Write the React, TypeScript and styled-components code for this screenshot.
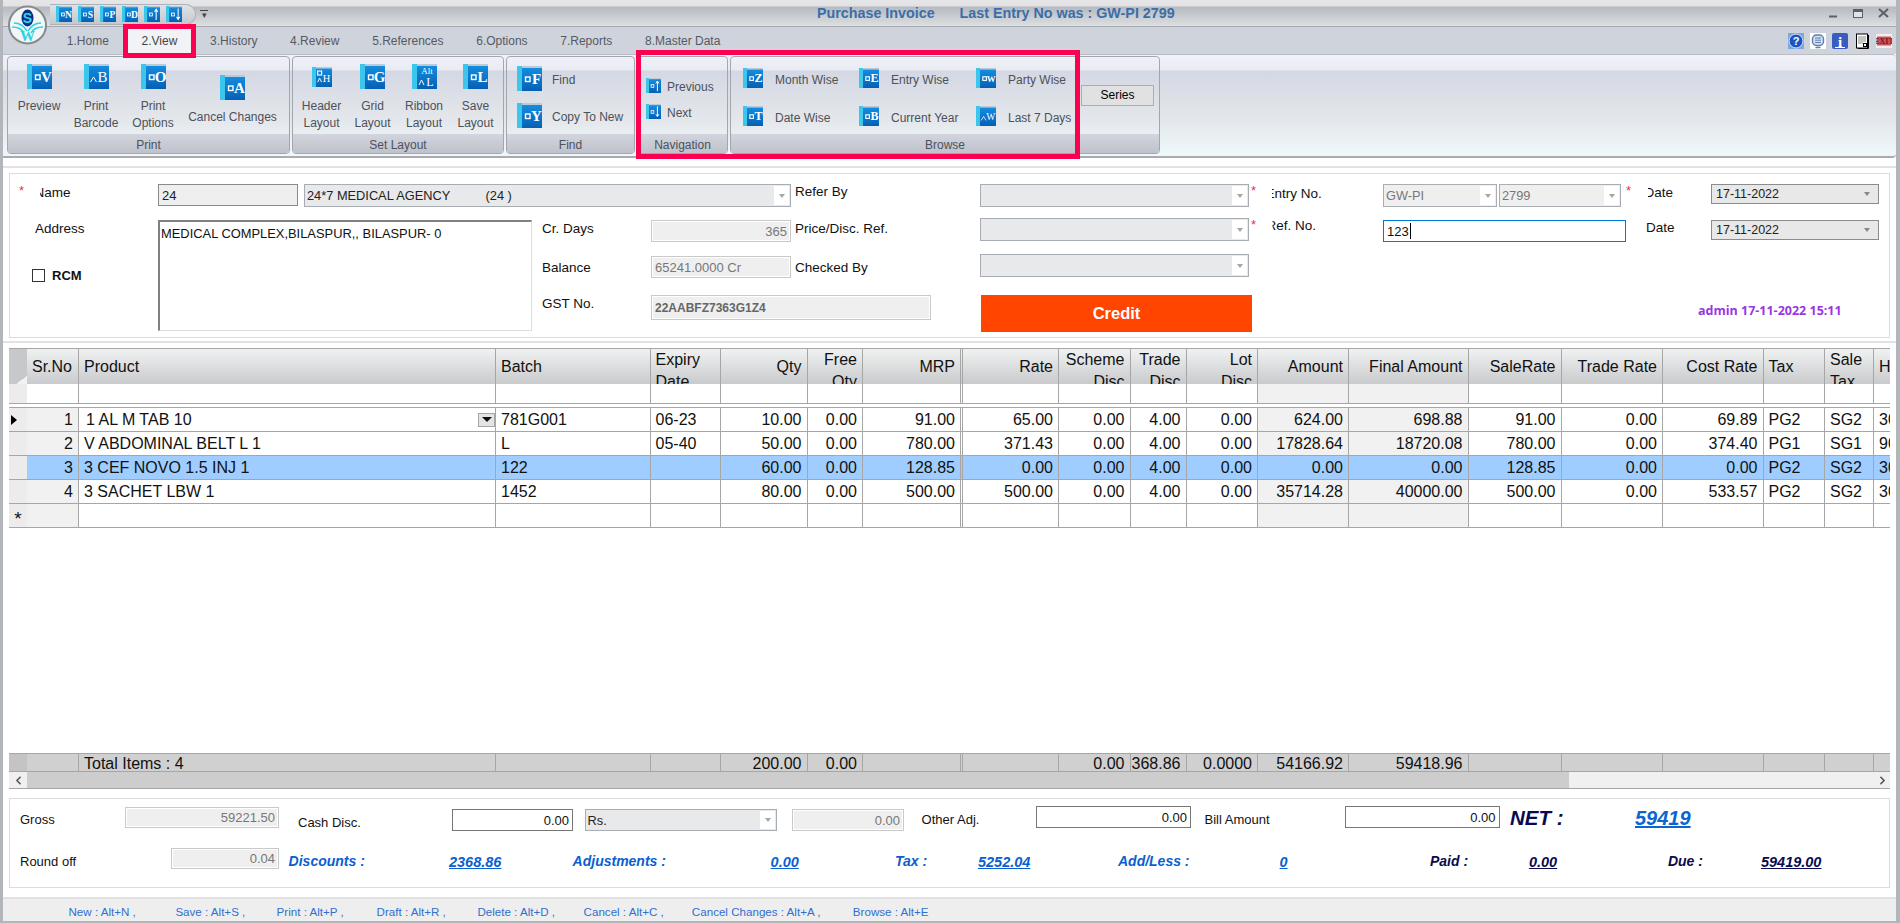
import React from "react";
import styled, { createGlobalStyle, css } from "styled-components";
import { ChevronLeft, ChevronRight } from "lucide-react";

const GlobalStyle = createGlobalStyle`
  html, body {
    margin: 0;
    padding: 0;
    overflow: hidden;
    background: #fff;
    font-family: "Liberation Sans", Arial, sans-serif;
  }
  * {
    box-sizing: border-box;
  }
`;

const Win = styled.div`
  position: relative;
  width: 1900px;
  height: 923px;
  display: flex;
  flex-direction: column;
  background: #fff;
  border-left: 3px solid #b2b5b9;
  border-right: 4px solid #b2b5b9;
  border-bottom: 2px solid #b2b5b9;
  overflow: hidden;
`;

/* ---------- title bar ---------- */

const TitleBar = styled.div`
  height: 27px;
  flex: none;
  display: flex;
  align-items: center;
  background: linear-gradient(#e6e6e8 0, #e2e2e5 6px, #b6bbc1 7px, #c6c9ce 15px, #dfe1e3 27px);
  border-bottom: 1px solid #a6aab0;
`;

const LogoSpot = styled.div`
  position: absolute;
  left: 5px;
  top: 5px;
  width: 39px;
  height: 40px;
  z-index: 3;
`;

const QuickBar = styled.div`
  margin-left: 47px;
  margin-top: 2px;
  width: 146px;
  height: 21px;
  display: flex;
  align-items: center;
  gap: 6px;
  padding-left: 6px;
  border: 1px solid #aeb2b8;
  border-left: none;
  border-radius: 0 10px 10px 0;
  background: linear-gradient(#e0e2e5, #c4c8cd);
`;

const QuickMore = styled.div`
  width: 8px;
  margin-left: 4px;
  margin-top: 2px;
  color: #444;
  font-size: 9px;
  line-height: 8px;
  text-align: center;
  border-top: 1px solid #444;
`;

const Title = styled.div`
  margin-left: 609px;
  display: flex;
  gap: 25px;
  color: #3a6ea8;
  font-size: 14.3px;
  font-weight: bold;
  white-space: nowrap;
`;

const WinControls = styled.div`
  margin-left: auto;
  display: flex;
  align-items: center;
  gap: 9px;
  padding-right: 5px;
`;

const WinBtn = styled.div`
  width: 16px;
  height: 14px;
  display: flex;
  align-items: center;
  justify-content: center;
`;

const TabStrip = styled.div`
  height: 27px;
  flex: none;
  display: flex;
  align-items: center;
  padding-left: 47.5px;
  background: #cfd3dc;
`;

const Tab = styled.div<{ $active?: boolean }>`
  position: relative;
  height: 100%;
  display: flex;
  align-items: center;
  padding: 0 16.35px;
  font-size: 12px;
  color: #555a63;
  white-space: nowrap;
  ${(p) =>
    p.$active &&
    css`
      background: #f2f3f6;
      color: #444;
      &::after {
        content: "";
        position: absolute;
        left: -2px;
        right: -2px;
        top: -3px;
        bottom: -4px;
        border: 5px solid #fb0050;
        z-index: 2;
      }
    `}
`;

const HelpIcons = styled.div`
  margin-left: auto;
  display: flex;
  align-items: center;
  gap: 6px;
  padding-right: 4px;
`;

/* ---------- ribbon ---------- */

const Ribbon = styled.div`
  position: relative;
  height: 104px;
  flex: none;
  display: flex;
  gap: 2px;
  padding: 1px 0 0 4px;
  border-bottom: 2px solid #a9abae;
  border-top: 1px solid #b9bcc2;
  border-radius: 0 4px 4px 0;
  background: linear-gradient(#f1f2f8 0, #e9ebf3 15px, #d4d8e4 16px, #e2e5e9 60px, #eef8fa 100px);
`;

const Group = styled.div<{ $w: number }>`
  width: ${(p) => p.$w}px;
  height: 98px;
  flex: none;
  display: flex;
  flex-direction: column;
  border: 1px solid #a2a6ad;
  border-radius: 4px;
  overflow: hidden;
`;

const GroupBody = styled.div`
  flex: 1;
  display: flex;
  min-height: 0;
`;

const GroupCaption = styled.div`
  height: 19px;
  flex: none;
  padding-top: 3px;
  font-size: 12px;
  line-height: 16px;
  text-align: center;
  color: #4c515a;
  background: linear-gradient(#d2d5de, #bfc2cb);
`;

const LargeRow = styled.div`
  display: flex;
  padding-left: 3px;
`;

const LargeBtn = styled.div<{ $w: number; $top?: number }>`
  width: ${(p) => p.$w}px;
  display: flex;
  flex-direction: column;
  align-items: center;
  padding-top: ${(p) => p.$top ?? 7}px;
  gap: 9px;
  font-size: 12px;
  line-height: 17px;
  text-align: center;
  color: #4c515a;
  white-space: pre-line;
`;

const IconSlot = styled.div`
  height: 25px;
  display: flex;
  align-items: center;
`;

const SmallList = styled.div<{ $gap: number; $left: number; $top: number }>`
  display: flex;
  flex-direction: column;
  gap: ${(p) => p.$gap}px;
  padding: ${(p) => p.$top}px 0 0 ${(p) => p.$left}px;
`;

const SmallBtn = styled.div<{ $gap: number }>`
  display: flex;
  align-items: center;
  gap: ${(p) => p.$gap}px;
  font-size: 12px;
  color: #4c515a;
  white-space: nowrap;
`;

const BtnText = styled.span`
  padding-top: 3px;
`;

const BrowseGrid = styled.div`
  display: grid;
  grid-template-columns: 116px 117px 105px;
  grid-auto-rows: 20px;
  row-gap: 18px;
  padding: 11px 0 0 12px;
`;

const SeriesBtn = styled.div`
  align-self: center;
  width: 73px;
  height: 21px;
  font-size: 12px;
  line-height: 19px;
  text-align: center;
  color: #000;
  background: #e1e1e1;
  border: 1px solid #adadad;
`;

const Annotation = styled.div`
  position: absolute;
  left: 632.5px;
  top: -5px;
  width: 444.5px;
  height: 109px;
  border: 5px solid #fb0050;
  z-index: 2;
`;

/* ---------- form ---------- */

const Rule = styled.div<{ $top: number }>`
  flex: none;
  height: 2px;
  margin-top: ${(p) => p.$top}px;
  background: #e2e2e2;
`;

const Panel = styled.div`
  flex: none;
  margin: 5px 6px 0;
  height: 165px;
  padding-top: 10px;
  border: 1px solid #dcdcdc;
`;

const FormGrid = styled.div`
  display: grid;
  grid-template-columns: 148px 140px 6px 228px 119px 140px 189px 269px 134px 114px 2px 122px 90px 168px;
  grid-template-rows: 34px 36px 41px 37px;
`;

const placed = css<{ $at: string; $top?: number; $w?: number; $h?: number }>`
  grid-area: ${(p) => p.$at};
  margin-top: ${(p) => p.$top ?? 0}px;
  ${(p) => p.$w !== undefined && `width: ${p.$w}px; justify-self: start;`}
  ${(p) => p.$h !== undefined && `height: ${p.$h}px; align-self: start;`}
`;

const Label = styled.div<{ $at: string; $top?: number; $pad?: number; $clip?: number }>`
  ${placed}
  padding-left: ${(p) => p.$pad ?? 0}px;
  font-size: 13.5px;
  line-height: 16px;
  height: 16px;
  color: #111;
  white-space: nowrap;
  ${(p) => p.$clip !== undefined && `clip-path: inset(0 0 0 ${p.$clip}px);`}
`;

const Star = styled.div<{ $at: string; $top?: number; $pad: number }>`
  ${placed}
  padding-left: ${(p) => p.$pad}px;
  font-size: 13px;
  line-height: 13px;
  height: 13px;
  color: #f0304a;
`;

const fieldBase = css`
  display: flex;
  align-items: center;
  padding: 0 3px;
  font-size: 13px;
  white-space: nowrap;
  overflow: hidden;
`;

const ReadOnlyBox = styled.div<{ $at?: string; $top?: number; $w?: number; $h?: number; $right?: boolean; $dark?: boolean }>`
  ${(p) => p.$at && placed}
  ${fieldBase}
  height: ${(p) => p.$h ?? 22}px;
  justify-content: ${(p) => (p.$right ? "flex-end" : "flex-start")};
  background: #efefef;
  color: ${(p) => (p.$dark ? "#222" : "#777")};
  border: 1px solid ${(p) => (p.$dark ? "#8a8a8a" : "#c9c9c9")};
  box-shadow: ${(p) => (p.$dark ? "none" : "inset 0 0 0 1px #fff")};
  ${(p) => p.$w !== undefined && `width: ${p.$w}px;`}
  flex-shrink: 0;
`;

const GstBox = styled(ReadOnlyBox)`
  font-size: 12px;
  font-weight: bold;
  color: #666;
`;

const Combo = styled.div<{ $at?: string; $top?: number; $w?: number; $h?: number; $soft?: boolean }>`
  ${(p) => p.$at && placed}
  ${fieldBase}
  height: ${(p) => p.$h ?? 23}px;
  padding: 0 1px 0 2px;
  font-size: 12.8px;
  background: ${(p) => (p.$soft ? "#efefef" : "#e8e9eb")};
  color: ${(p) => (p.$soft ? "#777" : "#222")};
  border: 1px solid #a8adb3;
  ${(p) => p.$w !== undefined && `width: ${p.$w}px;`}
  flex-shrink: 0;
`;

const ComboText = styled.span`
  flex: 1;
  white-space: pre;
`;

const ComboArrow = styled.span`
  width: 15px;
  height: calc(100% - 2px);
  flex: none;
  display: flex;
  align-items: center;
  justify-content: center;
  background: #fff;
  &::after {
    content: "";
    border-left: 3px solid transparent;
    border-right: 3px solid transparent;
    border-top: 4px solid #a5a5a5;
  }
`;

const DateBox = styled.div<{ $at: string; $top?: number }>`
  ${placed}
  ${fieldBase}
  height: 20px;
  align-self: start;
  padding: 0 8px 0 4px;
  justify-content: space-between;
  font-size: 12.5px;
  color: #222;
  background: #e8e8e8;
  border: 1px solid #8c8c8c;
  &::after {
    content: "";
    border-left: 3px solid transparent;
    border-right: 3px solid transparent;
    border-top: 4px solid #888;
  }
`;

const FocusInput = styled.div<{ $at: string; $top?: number; $w?: number; $h?: number }>`
  ${placed}
  ${fieldBase}
  border: 1px solid #0078d7;
  color: #111;
`;

const Caret = styled.span`
  width: 1px;
  height: 16px;
  margin-left: 1px;
  background: #000;
`;

const AddressBox = styled.div<{ $at: string; $top?: number; $h?: number }>`
  ${placed}
  padding: 4px 1px;
  font-size: 12.9px;
  line-height: 15px;
  color: #111;
  white-space: nowrap;
  border: 1px solid #dedede;
  border-top: 2px solid #808080;
  border-left: 2px solid #808080;
`;

const RcmCell = styled.label<{ $at: string; $top?: number }>`
  ${placed}
  padding-left: 22px;
  display: flex;
  align-items: center;
  gap: 7px;
  height: 14px;
  font-size: 13px;
  font-weight: bold;
  color: #111;
`;

const RcmBox = styled.span`
  width: 13px;
  height: 13px;
  border: 1px solid #333;
`;

const CreditBtn = styled.div<{ $at: string; $top?: number; $w?: number; $h?: number }>`
  ${placed}
  margin-left: 1px;
  display: flex;
  align-items: center;
  justify-content: center;
  font-size: 16.5px;
  font-weight: bold;
  color: #fff;
  background: #ff4500;
`;

const AuditText = styled.div<{ $at: string; $top?: number }>`
  ${placed}
  padding-left: 77px;
  font-family: "Open Sans", sans-serif;
  font-size: 12.5px;
  font-weight: bold;
  line-height: 16px;
  color: #9a35e6;
  white-space: nowrap;
`;

/* ---------- grid ---------- */

const GridFrame = styled.div`
  flex: none;
  margin: 3px 0 0;
  padding: 5px 6px 0;
  border-top: 2px solid #e2e2e2;
`;

const DataGrid = styled.div`
  height: 441px;
  display: flex;
  flex-direction: column;
  border-top: 1px solid #a6a6a6;
  border-bottom: 1px solid #a6a6a6;
  overflow: hidden;
`;

type Col = { w: number; right?: boolean; shade?: boolean; double?: boolean };

const columns: Col[] = [
  { w: 18, shade: true },
  { w: 52, right: true },
  { w: 417 },
  { w: 154.5 },
  { w: 70.5 },
  { w: 86.5, right: true },
  { w: 55.5, right: true },
  { w: 100, right: true, double: true },
  { w: 96, right: true },
  { w: 71.5, right: true },
  { w: 56, right: true },
  { w: 71.5, right: true },
  { w: 91, right: true, shade: true },
  { w: 119.5, right: true, shade: true },
  { w: 93, right: true },
  { w: 101.5, right: true },
  { w: 100.5, right: true },
  { w: 61.5 },
  { w: 49 },
  { w: 60 },
];

const trackList = columns.map((c) => `${c.w}px`).join(" ");

const Row = styled.div<{ $h: number }>`
  flex: none;
  height: ${(p) => p.$h}px;
  display: grid;
  grid-template-columns: ${trackList};
`;

const cellEdge = css<{ $double?: boolean }>`
  border-right: ${(p) => (p.$double ? "3px double #a6a6a6" : "1px solid #a6a6a6")};
`;

const HeadCell = styled.div<{ $right?: boolean; $double?: boolean; $two?: boolean }>`
  ${cellEdge}
  display: flex;
  align-items: ${(p) => (p.$two ? "flex-start" : "center")};
  justify-content: ${(p) => (p.$right ? "flex-end" : "flex-start")};
  padding: 0 5px;
  font-size: 16px;
  line-height: ${(p) => (p.$two ? "22px" : "18px")};
  color: #111;
  text-align: ${(p) => (p.$right ? "right" : "left")};
  white-space: pre;
  overflow: hidden;
  background: linear-gradient(#f0f2f2, #c8cacc);
`;

const CornerCell = styled(HeadCell)`
  background:
    linear-gradient(to bottom right, transparent 50%, #f2f2f2 50%) right bottom / 11px 8px no-repeat,
    #c6c8ca;
  border-right: none;
`;

const Cell = styled.div<{ $right?: boolean; $double?: boolean; $tone?: string }>`
  ${cellEdge}
  display: flex;
  align-items: center;
  justify-content: ${(p) => (p.$right ? "flex-end" : "flex-start")};
  padding: 0 5px;
  border-bottom: 1px solid #a6a6a6;
  background: ${(p) => p.$tone ?? "#fff"};
  font-size: 16px;
  color: #111;
  white-space: nowrap;
  overflow: hidden;
`;

const GutterCell = styled(Cell)`
  justify-content: center;
  padding: 0;
  border-right: none;
  background: #ececec;
`;

const TotalGutter = styled(GutterCell)`
  background: #c4c4c4;
  border-bottom: none;
`;

const TotalCell = styled(Cell)`
  padding-top: 3px;
  font-size: 16px;
  background: #d0d0d0;
  border-bottom: none;
`;

const RowPointer = styled.span`
  border-top: 5px solid transparent;
  border-bottom: 5px solid transparent;
  border-left: 6px solid #000;
  margin-right: 9px;
`;

const RowStar = styled.span`
  font-size: 19px;
  line-height: 10px;
  padding-top: 6px;
`;

const ProductEdit = styled.span`
  flex: 1;
  padding-left: 2px;
  padding-top: 1px;
`;

const CellDrop = styled.span`
  width: 17px;
  height: 14px;
  margin-right: -5px;
  display: flex;
  align-items: center;
  justify-content: center;
  background: #e4e4e4;
  border: 1px solid #a6a6a6;
  &::after {
    content: "";
    border-left: 5px solid transparent;
    border-right: 5px solid transparent;
    border-top: 5px solid #111;
  }
`;

const DoubleLine = styled.div`
  flex: none;
  height: 4px;
  border-bottom: 1px solid #a6a6a6;
`;

const GridGap = styled.div`
  flex: 1;
`;

const TotalsRow = styled(Row)`
  border-top: 1px solid #a6a6a6;
  border-bottom: 1px solid #a6a6a6;
  background: #d0d0d0;
`;

const ScrollBar = styled.div`
  flex: none;
  height: 16px;
  display: flex;
  background: #f0f0f0;
  color: #555;
`;

const ScrollEnd = styled.div<{ $w: number }>`
  width: ${(p) => p.$w}px;
  display: flex;
  align-items: center;
  justify-content: center;
`;

const ScrollThumb = styled.div`
  width: 1542px;
  background: #cdcdcd;
`;

const ScrollTrack = styled.div`
  flex: 1;
`;

/* ---------- summary footer ---------- */

const Summary = styled.div`
  flex: none;
  height: 90px;
  margin: 9px 6px 0;
  padding: 7px 0 0 10px;
  display: flex;
  flex-direction: column;
  border: 1px solid #dcdcdc;
`;

const SummaryRow = styled.div<{ $h: number }>`
  height: ${(p) => p.$h}px;
  display: flex;
  align-items: flex-start;
`;

const SumLabel = styled.div<{ $w: number; $ml?: number; $top: number }>`
  width: ${(p) => p.$w}px;
  margin-left: ${(p) => p.$ml ?? 0}px;
  margin-top: ${(p) => p.$top}px;
  flex: none;
  font-size: 13px;
  line-height: 16px;
  color: #111;
  white-space: nowrap;
`;

const AmountInput = styled.div<{ $w: number; $top: number }>`
  width: ${(p) => p.$w}px;
  height: 22px;
  margin-top: ${(p) => p.$top}px;
  flex: none;
  display: flex;
  align-items: center;
  justify-content: flex-end;
  padding: 0 3px;
  font-size: 13px;
  color: #111;
  background: #fff;
  border: 1px solid #777;
`;

const Spaced = styled.div<{ $ml: number; $top: number }>`
  margin-left: ${(p) => p.$ml}px;
  margin-top: ${(p) => p.$top}px;
  flex: none;
  display: flex;
`;

const NetLabel = styled.div`
  width: 125px;
  flex: none;
  margin-left: 10.4px;
  font-size: 20.5px;
  font-weight: bold;
  font-style: italic;
  line-height: 24px;
  color: #0a0a50;
`;

const NetValue = styled.a`
  font-size: 20px;
  font-weight: bold;
  font-style: italic;
  line-height: 24px;
  color: #0a66d0;
  text-decoration: underline;
`;

const SumText = styled.div<{ $w: number; $navy?: boolean; $ml?: number }>`
  width: ${(p) => p.$w}px;
  margin-left: ${(p) => p.$ml ?? 0}px;
  margin-top: 5px;
  flex: none;
  font-size: 14px;
  font-weight: bold;
  font-style: italic;
  line-height: 16px;
  color: ${(p) => (p.$navy ? "#0a0a50" : "#0a60d0")};
  white-space: nowrap;
`;

const SumValue = styled(SumText)`
  margin-top: 6px;
  font-size: 14.5px;
  text-decoration: underline;
`;

const StatusBar = styled.div`
  flex: 1;
  display: flex;
  align-items: center;
  padding: 3px 0 0 65.5px;
  font-size: 11.6px;
  color: #2f6fd0;
  background: #eee;
  white-space: nowrap;
`;

const Shortcut = styled.span<{ $w: number }>`
  width: ${(p) => p.$w}px;
  flex: none;
`;

/* ---------- drawings ---------- */

type Mark = "square" | "hat" | "header" | "alt" | "up" | "down";

const BookIcon = ({ size = 25, glyph = "", mark = "square" }: { size?: number; glyph?: string; mark?: Mark }) => (
  <svg width={size} height={size} viewBox="0 0 25 25" style={{ flex: "none", display: "block" }}>
    <defs>
      <linearGradient id="bookBlue" x1="0" y1="0" x2="0" y2="1">
        <stop offset="0" stopColor="#1590e4" />
        <stop offset="1" stopColor="#0560b4" />
      </linearGradient>
    </defs>
    <rect x="0" y="0" width="25" height="25" fill="url(#bookBlue)" />
    <rect x="5" y="0" width="20" height="2" fill="#bccad6" />
    <rect x="0" y="0" width="5" height="25" fill="#3dc6ec" />
    {(mark === "square" || mark === "up" || mark === "down") && (
      <rect x="8.5" y="11" width="4.5" height="4.5" fill="none" stroke="#fff" strokeWidth="1.4" />
    )}
    {mark === "square" && (
      <text
        x={glyph === "W" ? 19 : 19.5}
        y={glyph === "W" ? 17 : 18}
        textAnchor="middle"
        fontFamily="Liberation Serif"
        fontWeight="bold"
        fontSize={glyph === "W" ? 11 : 15}
        fill="#fff"
      >
        {glyph}
      </text>
    )}
    {mark === "hat" && (
      <>
        <path d="M6.5 18 L9.5 13 L12.5 18" fill="none" stroke="#fff" strokeWidth="1" />
        <text
          x="18.5"
          y="18"
          textAnchor="middle"
          fontFamily="Liberation Serif"
          fontSize={glyph === "W" ? 12 : 15}
          fill="#fff"
        >
          {glyph}
        </text>
      </>
    )}
    {mark === "header" && (
      <>
        <rect x="7" y="5" width="5" height="5" fill="none" stroke="#fff" strokeWidth="1.4" />
        <path d="M7 19 L9.5 14 L12 19" fill="none" stroke="#fff" strokeWidth="1.2" />
        <text x="18" y="19" textAnchor="middle" fontFamily="Liberation Serif" fontSize="13" fill="#fff">
          {glyph}
        </text>
      </>
    )}
    {mark === "alt" && (
      <>
        <text x="15" y="10" textAnchor="middle" fontFamily="Liberation Serif" fontSize="9" fill="#fff">
          Alt
        </text>
        <path d="M7 21 L9.5 16 L12 21" fill="none" stroke="#fff" strokeWidth="1" />
        <text x="18" y="22" textAnchor="middle" fontFamily="Liberation Serif" fontSize="12" fill="#fff">
          {glyph}
        </text>
      </>
    )}
    {mark === "up" && <path d="M19 22 V6 M16.5 9 L19 5 L21.5 9" fill="none" stroke="#fff" strokeWidth="1.6" />}
    {mark === "down" && <path d="M19 4 V20 M16.5 17 L19 21 L21.5 17" fill="none" stroke="#fff" strokeWidth="1.6" />}
  </svg>
);

const AppLogo = () => (
  <svg width="39" height="40" viewBox="0 0 39 40">
    <circle cx="19.5" cy="20" r="18.5" fill="#f4f6f6" stroke="#858a8e" strokeWidth="2" />
    <ellipse cx="19.5" cy="13" rx="6" ry="8.5" fill="#0d2d8a" />
    <text x="19.5" y="18" textAnchor="middle" fontFamily="Liberation Sans" fontWeight="bold" fontSize="14" fill="#35d6e8">
      S
    </text>
    <path d="M4 22 C10 22 14 24 16 28 M35 22 C29 22 25 24 23 28 M6 18 C12 18 16 21 19 26 M33 18 C27 18 23 21 20 26" fill="none" stroke="#27d5e4" strokeWidth="1.5" />
    <text x="19.5" y="36" textAnchor="middle" fontFamily="Liberation Serif" fontWeight="bold" fontSize="15" fill="#27d5e4">
      W
    </text>
  </svg>
);

const HelpIcon = () => (
  <svg width="16" height="16" viewBox="0 0 16 16" style={{ display: "block" }}>
    <rect width="16" height="16" fill="#7ea6dc" />
    <circle cx="8" cy="8" r="7" fill="#1d56c4" stroke="#d8e4f6" strokeWidth="1" />
    <text x="8" y="12" textAnchor="middle" fontFamily="Liberation Sans" fontWeight="bold" fontSize="11" fill="#fff">
      ?
    </text>
  </svg>
);

const ScreenIcon = () => (
  <svg width="16" height="16" viewBox="0 0 16 16" style={{ display: "block" }}>
    <rect width="16" height="16" fill="#fff" />
    <rect x="2.5" y="2" width="11" height="10.5" rx="4" fill="#d9e1ee" stroke="#5d7fb0" strokeWidth="1.4" />
    <path d="M5 5 H11 M5 7.2 H11 M5 9.5 H11" stroke="#5d7fb0" strokeWidth="1" />
    <path d="M5.5 14.5 H10.5" stroke="#5d7fb0" strokeWidth="1.4" />
  </svg>
);

const InfoIcon = () => (
  <svg width="16" height="16" viewBox="0 0 16 16" style={{ display: "block" }}>
    <rect width="16" height="16" rx="2" fill="#3a5cc0" />
    <text x="8" y="13.5" textAnchor="middle" fontFamily="Liberation Serif" fontWeight="bold" fontSize="15" fill="#fff">
      i
    </text>
    <path d="M3 14.5 H13" stroke="#fff" strokeWidth="1" />
  </svg>
);

const DocIcon = () => (
  <svg width="16" height="16" viewBox="0 0 16 16" style={{ display: "block" }}>
    <rect x="2.5" y="1" width="11" height="14" fill="#fff" stroke="#000" />
    <path d="M14.5 2 V15.5 H4" fill="none" stroke="#000" strokeWidth="1" />
    <path d="M4 4 H12 M4 6 H12 M4 8 H12 M4 10 H9" stroke="#888" strokeWidth="1" />
    <rect x="9.5" y="10.5" width="3" height="3" fill="none" stroke="#000" />
  </svg>
);

const ExitIcon = () => (
  <svg width="16" height="14" viewBox="0 0 16 14" style={{ display: "block" }}>
    <rect width="16" height="14" fill="#f4eeee" />
    <rect x="1" y="2.5" width="14" height="9" fill="#c7545c" />
    <text x="8" y="10" textAnchor="middle" fontFamily="Liberation Serif" fontWeight="bold" fontSize="8" fill="#7d1620">
      EXIT
    </text>
  </svg>
);

/* ---------- data ---------- */

const tabs = ["1.Home", "2.View", "3.History", "4.Review", "5.References", "6.Options", "7.Reports", "8.Master Data"];

const headers = [
  "",
  "Sr.No",
  "Product",
  "Batch",
  "Expiry\nDate",
  "Qty",
  "Free\nQty",
  "MRP",
  "Rate",
  "Scheme\nDisc",
  "Trade\nDisc",
  "Lot\nDisc",
  "Amount",
  "Final Amount",
  "SaleRate",
  "Trade Rate",
  "Cost Rate",
  "Tax",
  "Sale\nTax",
  "H",
];

const rows = [
  ["1", "1 AL M TAB 10", "781G001", "06-23", "10.00", "0.00", "91.00", "65.00", "0.00", "4.00", "0.00", "624.00", "698.88", "91.00", "0.00", "69.89", "PG2", "SG2", "30"],
  ["2", "V ABDOMINAL BELT L 1", "L", "05-40", "50.00", "0.00", "780.00", "371.43", "0.00", "4.00", "0.00", "17828.64", "18720.08", "780.00", "0.00", "374.40", "PG1", "SG1", "90"],
  ["3", "3 CEF NOVO 1.5 INJ 1", "122", "", "60.00", "0.00", "128.85", "0.00", "0.00", "4.00", "0.00", "0.00", "0.00", "128.85", "0.00", "0.00", "PG2", "SG2", "30"],
  ["4", "3 SACHET LBW 1", "1452", "", "80.00", "0.00", "500.00", "500.00", "0.00", "4.00", "0.00", "35714.28", "40000.00", "500.00", "0.00", "533.57", "PG2", "SG2", "30"],
  ["", "", "", "", "", "", "", "", "", "", "", "", "", "", "", "", "", "", ""],
];

const totals = ["", "Total Items : 4", "", "", "200.00", "0.00", "", "", "0.00", "368.86", "0.0000", "54166.92", "59418.96", "", "", "", "", "", ""];

const shortcuts: [string, number][] = [
  ["New : Alt+N ,", 106.9],
  ["Save : Alt+S ,", 101.2],
  ["Print : Alt+P ,", 100],
  ["Draft : Alt+R ,", 100.8],
  ["Delete : Alt+D ,", 106.2],
  ["Cancel : Alt+C ,", 108.3],
  ["Cancel Changes : Alt+A ,", 161],
  ["Browse : Alt+E", 100],
];

const browse: [string, string, Mark][] = [
  ["Z", "Month Wise", "square"],
  ["E", "Entry Wise", "square"],
  ["W", "Party Wise", "square"],
  ["T", "Date Wise", "square"],
  ["B", "Current Year", "square"],
  ["W", "Last 7 Days", "hat"],
];

const cellTone = (col: number, selected: boolean) => {
  if (selected) return "#9fcdff";
  if (col === 1 || columns[col].shade) return "#f1f1f1";
  return "#fff";
};

export default function App() {
  return (
    <>
      <GlobalStyle />
      <Win>
        <LogoSpot>
          <AppLogo />
        </LogoSpot>

        <TitleBar>
          <QuickBar>
            {["N", "S", "P", "D"].map((g) => (
              <BookIcon key={g} size={16} glyph={g} />
            ))}
            <BookIcon size={16} mark="up" />
            <BookIcon size={16} mark="down" />
          </QuickBar>
          <QuickMore>▾</QuickMore>
          <Title>
            <span>Purchase Invoice</span>
            <span>Last Entry No was : GW-PI 2799</span>
          </Title>
          <WinControls>
            <WinBtn>
              <svg width="10" height="10" viewBox="0 0 10 10">
                <path d="M1 8.5 H9" stroke="#5c6066" strokeWidth="2" />
              </svg>
            </WinBtn>
            <WinBtn>
              <svg width="10" height="9" viewBox="0 0 10 9">
                <rect x="0.5" y="0.5" width="9" height="8" fill="#dfe2e6" stroke="#5c6066" />
                <path d="M0.5 2 H9.5" stroke="#5c6066" strokeWidth="2" />
              </svg>
            </WinBtn>
            <WinBtn>
              <svg width="11" height="10" viewBox="0 0 11 10">
                <path d="M1 1 L10 9 M10 1 L1 9" stroke="#5c6066" strokeWidth="2" />
              </svg>
            </WinBtn>
          </WinControls>
        </TitleBar>

        <TabStrip>
          {tabs.map((t) => (
            <Tab key={t} $active={t === "2.View"}>
              {t}
            </Tab>
          ))}
          <HelpIcons>
            <HelpIcon />
            <ScreenIcon />
            <InfoIcon />
            <DocIcon />
            <ExitIcon />
          </HelpIcons>
        </TabStrip>

        <Ribbon>
          <Group $w={283}>
            <GroupBody>
              <LargeRow>
                <LargeBtn $w={56}>
                  <IconSlot>
                    <BookIcon glyph="V" />
                  </IconSlot>
                  Preview
                </LargeBtn>
                <LargeBtn $w={58}>
                  <IconSlot>
                    <BookIcon glyph="B" mark="hat" />
                  </IconSlot>
                  {"Print\nBarcode"}
                </LargeBtn>
                <LargeBtn $w={56}>
                  <IconSlot>
                    <BookIcon glyph="O" />
                  </IconSlot>
                  {"Print\nOptions"}
                </LargeBtn>
                <LargeBtn $w={103} $top={18}>
                  <IconSlot>
                    <BookIcon glyph="A" />
                  </IconSlot>
                  Cancel Changes
                </LargeBtn>
              </LargeRow>
            </GroupBody>
            <GroupCaption>Print</GroupCaption>
          </Group>

          <Group $w={212}>
            <GroupBody>
              <LargeRow>
                <LargeBtn $w={51}>
                  <IconSlot>
                    <BookIcon size={20} glyph="H" mark="header" />
                  </IconSlot>
                  {"Header\nLayout"}
                </LargeBtn>
                <LargeBtn $w={51}>
                  <IconSlot>
                    <BookIcon glyph="G" />
                  </IconSlot>
                  {"Grid\nLayout"}
                </LargeBtn>
                <LargeBtn $w={52}>
                  <IconSlot>
                    <BookIcon glyph="L" mark="alt" />
                  </IconSlot>
                  {"Ribbon\nLayout"}
                </LargeBtn>
                <LargeBtn $w={51}>
                  <IconSlot>
                    <BookIcon glyph="L" />
                  </IconSlot>
                  {"Save\nLayout"}
                </LargeBtn>
              </LargeRow>
            </GroupBody>
            <GroupCaption>Set Layout</GroupCaption>
          </Group>

          <Group $w={129}>
            <GroupBody>
              <SmallList $gap={12} $left={10} $top={9}>
                <SmallBtn $gap={10}>
                  <BookIcon glyph="F" />
                  <BtnText>Find</BtnText>
                </SmallBtn>
                <SmallBtn $gap={10}>
                  <BookIcon glyph="Y" />
                  <BtnText>Copy To New</BtnText>
                </SmallBtn>
              </SmallList>
            </GroupBody>
            <GroupCaption>Find</GroupCaption>
          </Group>

          <Group $w={91}>
            <GroupBody>
              <SmallList $gap={9} $left={8} $top={20}>
                <SmallBtn $gap={6}>
                  <BookIcon size={15} mark="up" />
                  <BtnText>Previous</BtnText>
                </SmallBtn>
                <SmallBtn $gap={6}>
                  <BookIcon size={15} mark="down" />
                  <BtnText>Next</BtnText>
                </SmallBtn>
              </SmallList>
            </GroupBody>
            <GroupCaption>Navigation</GroupCaption>
          </Group>

          <Group $w={430}>
            <GroupBody>
              <BrowseGrid>
                {browse.map(([g, t, m]) => (
                  <SmallBtn key={t} $gap={12}>
                    <BookIcon size={20} glyph={g} mark={m} />
                    <BtnText>{t}</BtnText>
                  </SmallBtn>
                ))}
              </BrowseGrid>
              <SeriesBtn>Series</SeriesBtn>
            </GroupBody>
            <GroupCaption>Browse</GroupCaption>
          </Group>

          <Annotation />
        </Ribbon>

        <Rule $top={8} />

        <Panel>
          <FormGrid>
            <Star $at="1 / 1" $pad={9}>
              *
            </Star>
            <Label $at="1 / 1" $pad={24.5} $clip={30} $top={1}>
              Name
            </Label>
            <ReadOnlyBox $at="1 / 2" $dark>
              24
            </ReadOnlyBox>
            <Combo $at="1 / 4 / auto / 7" $h={23}>
              <ComboText>{"24*7 MEDICAL AGENCY          (24 )"}</ComboText>
              <ComboArrow />
            </Combo>
            <Label $at="1 / 7" $pad={4}>
              Refer By
            </Label>
            <Combo $at="1 / 8" $h={23}>
              <ComboText />
              <ComboArrow />
            </Combo>
            <Star $at="1 / 9" $pad={2}>
              *
            </Star>
            <Label $at="1 / 9" $pad={16.5} $clip={23} $top={2}>
              Entry No.
            </Label>
            <Combo $at="1 / 10" $soft>
              <ComboText>GW-PI</ComboText>
              <ComboArrow />
            </Combo>
            <Combo $at="1 / 12" $soft>
              <ComboText>2799</ComboText>
              <ComboArrow />
            </Combo>
            <Star $at="1 / 13" $pad={5}>
              *
            </Star>
            <Label $at="1 / 13" $pad={23.5} $clip={27} $top={1}>
              Date
            </Label>
            <DateBox $at="1 / 14">17-11-2022</DateBox>

            <Label $at="2 / 1" $pad={25} $top={3}>
              Address
            </Label>
            <AddressBox $at="2 / 2 / 5 / 5" $top={2} $h={111}>
              MEDICAL COMPLEX,BILASPUR,, BILASPUR- 0
            </AddressBox>
            <Label $at="2 / 5" $pad={10} $top={3}>
              Cr. Days
            </Label>
            <ReadOnlyBox $at="2 / 6" $top={2} $right>
              365
            </ReadOnlyBox>
            <Label $at="2 / 7" $pad={4} $top={3}>
              Price/Disc. Ref.
            </Label>
            <Combo $at="2 / 8">
              <ComboText />
              <ComboArrow />
            </Combo>
            <Star $at="2 / 9" $pad={2}>
              *
            </Star>
            <Label $at="2 / 9" $pad={17.5} $clip={23.5}>
              Ref. No.
            </Label>
            <FocusInput $at="2 / 10 / auto / 13" $top={2} $w={243} $h={22}>
              123
              <Caret />
            </FocusInput>
            <Label $at="2 / 13" $pad={25} $top={2}>
              Date
            </Label>
            <DateBox $at="2 / 14" $top={2}>
              17-11-2022
            </DateBox>

            <RcmCell $at="3 / 1" $top={14}>
              <RcmBox />
              RCM
            </RcmCell>
            <Label $at="3 / 5" $pad={10} $top={6}>
              Balance
            </Label>
            <ReadOnlyBox $at="3 / 6" $top={2}>
              65241.0000 Cr
            </ReadOnlyBox>
            <Label $at="3 / 7" $pad={4} $top={6}>
              Checked By
            </Label>
            <Combo $at="3 / 8">
              <ComboText />
              <ComboArrow />
            </Combo>

            <Label $at="4 / 5" $pad={10} $top={1}>
              GST No.
            </Label>
            <GstBox $at="4 / 6 / auto / 8" $w={280} $h={25}>
              22AABFZ7363G1Z4
            </GstBox>
            <CreditBtn $at="4 / 8" $w={271} $h={37}>
              Credit
            </CreditBtn>
            <AuditText $at="4 / 13 / auto / 15" $top={8}>
              admin 17-11-2022 15:11
            </AuditText>
          </FormGrid>
        </Panel>

        <GridFrame>
          <DataGrid>
            <Row $h={35}>
              {headers.map((h, i) =>
                i === 0 ? (
                  <CornerCell key={i} />
                ) : (
                  <HeadCell key={i} $right={columns[i].right && i !== 1} $double={columns[i].double} $two={h.includes("\n")}>
                    {h}
                  </HeadCell>
                )
              )}
            </Row>
            <Row $h={20}>
              {columns.map((c, i) =>
                i === 0 ? <GutterCell key={i} /> : <Cell key={i} $double={c.double} $tone={c.shade ? "#f1f1f1" : "#fff"} />
              )}
            </Row>
            <DoubleLine />
            {rows.map((r, ri) => (
              <Row key={ri} $h={24}>
                <GutterCell>
                  {ri === 0 && <RowPointer />}
                  {ri === 4 && <RowStar>*</RowStar>}
                </GutterCell>
                {r.map((v, i) => {
                  const col = columns[i + 1];
                  return (
                    <Cell key={i} $right={col.right} $double={col.double} $tone={cellTone(i + 1, ri === 2)}>
                      {ri === 0 && i === 1 ? (
                        <>
                          <ProductEdit>{v}</ProductEdit>
                          <CellDrop />
                        </>
                      ) : (
                        v
                      )}
                    </Cell>
                  );
                })}
              </Row>
            ))}
            <GridGap />
            <TotalsRow $h={19}>
              <TotalGutter />
              {totals.map((v, i) => {
                const col = columns[i + 1];
                return (
                  <TotalCell key={i} $right={col.right} $double={col.double}>
                    {v}
                  </TotalCell>
                );
              })}
            </TotalsRow>
            <ScrollBar>
              <ScrollEnd $w={18}>
                <ChevronLeft size={13} strokeWidth={3} />
              </ScrollEnd>
              <ScrollThumb />
              <ScrollTrack />
              <ScrollEnd $w={16}>
                <ChevronRight size={13} strokeWidth={3} />
              </ScrollEnd>
            </ScrollBar>
          </DataGrid>
        </GridFrame>

        <Summary>
          <SummaryRow $h={42}>
            <SumLabel $w={104.5} $top={6}>
              Gross
            </SumLabel>
            <Spaced $ml={0} $top={1}>
              <ReadOnlyBox $w={154.5} $h={21} $right>
                59221.50
              </ReadOnlyBox>
            </Spaced>
            <SumLabel $w={154} $ml={19} $top={9}>
              Cash Disc.
            </SumLabel>
            <AmountInput $w={121} $top={3}>
              0.00
            </AmountInput>
            <Spaced $ml={11.5} $top={3}>
              <Combo $w={192.5} $h={22}>
                <ComboText>Rs.</ComboText>
                <ComboArrow />
              </Combo>
            </Spaced>
            <Spaced $ml={15} $top={3}>
              <ReadOnlyBox $w={112} $right>
                0.00
              </ReadOnlyBox>
            </Spaced>
            <SumLabel $w={114.4} $ml={17.6} $top={6}>
              Other Adj.
            </SumLabel>
            <AmountInput $w={155} $top={0}>
              0.00
            </AmountInput>
            <SumLabel $w={140.5} $ml={13.5} $top={6}>
              Bill Amount
            </SumLabel>
            <AmountInput $w={154.6} $top={0}>
              0.00
            </AmountInput>
            <NetLabel>NET :</NetLabel>
            <NetValue>59419</NetValue>
          </SummaryRow>
          <SummaryRow $h={39}>
            <SumLabel $w={151} $top={6}>
              Round off
            </SumLabel>
            <ReadOnlyBox $w={108} $h={21} $right>
              0.04
            </ReadOnlyBox>
            <SumText $w={160.4} $ml={9.6}>
              Discounts :
            </SumText>
            <SumValue $w={123.6}>2368.86</SumValue>
            <SumText $w={198}>Adjustments :</SumText>
            <SumValue $w={124.4}>0.00</SumValue>
            <SumText $w={83}>Tax :</SumText>
            <SumValue $w={140}>5252.04</SumValue>
            <SumText $w={161.6}>Add/Less :</SumText>
            <SumValue $w={150.4}>0</SumValue>
            <SumText $w={99} $navy>
              Paid :
            </SumText>
            <SumValue $w={139} $navy>
              0.00
            </SumValue>
            <SumText $w={93} $navy>
              Due :
            </SumText>
            <SumValue $w={80} $navy>
              59419.00
            </SumValue>
          </SummaryRow>
        </Summary>

        <Rule $top={9} />

        <StatusBar>
          {shortcuts.map(([s, w]) => (
            <Shortcut key={s} $w={w}>
              {s}
            </Shortcut>
          ))}
        </StatusBar>
      </Win>
    </>
  );
}
